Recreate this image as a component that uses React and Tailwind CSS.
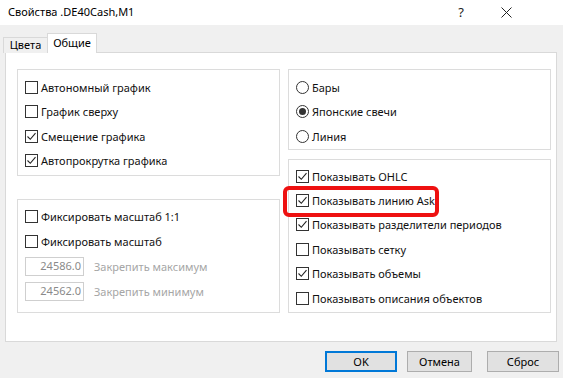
import React from 'react';

const font = { fontFamily: '"Noto Sans", "Open Sans", sans-serif' };

function Check({ checked }) {
  return (
    <span className="w-[13px] h-[13px] border border-[#333] bg-white flex items-center justify-center shrink-0">
      {checked && (
        <svg width="11" height="11" viewBox="0 0 11 11">
          <path d="M1.5 5.5 L4.3 8.3 L9.5 2.2" fill="none" stroke="#222" strokeWidth="1.1" />
        </svg>
      )}
    </span>
  );
}

function Radio({ checked }) {
  return (
    <span className="w-[13px] h-[13px] rounded-full border border-[#333] bg-white flex items-center justify-center shrink-0">
      {checked && <span className="w-[7px] h-[7px] rounded-full bg-[#333]" />}
    </span>
  );
}

function CheckRow({ label, checked, h = 'h-[24.5px]' }) {
  return (
    <div className={`${h} flex items-center gap-[3px] pl-[7px]`}>
      <Check checked={checked} />
      <span className="text-[11px] text-[#111] leading-none">{label}</span>
    </div>
  );
}

function RadioRow({ label, checked }) {
  return (
    <div className="h-[24.5px] flex items-center gap-[3px] pl-[7px]">
      <Radio checked={checked} />
      <span className="text-[11px] text-[#111] leading-none">{label}</span>
    </div>
  );
}

function ValueRow({ value, label }) {
  return (
    <div className="h-[25px] flex items-center pl-[7px] gap-[10px]">
      <div className="w-[59px] h-[19px] border border-[#cfcfcf] bg-white flex items-center justify-end pr-[2px] text-[11px] text-[#8a8a8a]">
        {value}
      </div>
      <span className="text-[11px] text-[#a6a6a6] leading-none">{label}</span>
    </div>
  );
}

export default function App() {
  return (
    <div style={font} className="relative w-[563px] h-[378px] bg-[#f0f0f0] flex flex-col overflow-hidden select-none">
      <div className="h-[25px] bg-white flex items-center pl-[8px]">
        <span className="text-[11px] text-black flex-1">Свойства .DE40Cash,M1</span>
        <span className="w-[20px] text-center text-[13px] text-[#222] mr-[25px]">?</span>
        <span className="w-[20px] flex justify-center mr-[47px]">
          <svg width="11" height="11" viewBox="0 0 11 11">
            <path d="M0.5 0.5 L10.5 10.5 M10.5 0.5 L0.5 10.5" stroke="#222" strokeWidth="1" />
          </svg>
        </span>
      </div>

      <div className="flex items-end h-[20px] pl-[3px] mt-[8px] -mb-px relative z-10">
        <div className="w-[45px] h-[16px] border border-b-0 border-[#d9d9d9] bg-[#f0f0f0] flex items-center justify-center text-[11px] text-black">
          Цвета
        </div>
        <div className="w-[50px] h-[20px] border border-b-0 border-[#d9d9d9] bg-white flex items-center justify-center text-[11px] text-black -ml-px">
          Общие
        </div>
      </div>

      <div className="ml-[5px] w-[552px] h-[290px] border border-[#d9d9d9] bg-white flex gap-[8px] pl-[11px] pt-[16px]">
        <div className="w-[263px] flex flex-col gap-[23px]">
          <div className="h-[107px] border border-[#dcdcdc] pt-[5px]">
            <CheckRow label="Автономный график" />
            <CheckRow label="График сверху" />
            <CheckRow label="Смещение графика" checked />
            <CheckRow label="Автопрокрутка графика" checked />
          </div>
          <div className="h-[114px] border border-[#dcdcdc] pt-[4px]">
            <CheckRow label="Фиксировать масштаб 1:1" h="h-[25px]" />
            <CheckRow label="Фиксировать масштаб" h="h-[25px]" />
            <ValueRow value="24586.0" label="Закрепить максимум" />
            <ValueRow value="24562.0" label="Закрепить минимум" />
          </div>
        </div>
        <div className="w-[263px] flex flex-col gap-[9px]">
          <div className="h-[81px] border border-[#dcdcdc] pt-[5px]">
            <RadioRow label="Бары" />
            <RadioRow label="Японские свечи" checked />
            <RadioRow label="Линия" />
          </div>
          <div className="h-[154px] border border-[#dcdcdc] pt-[4px]">
            <CheckRow label="Показывать OHLC" checked h="h-[24.4px]" />
            <CheckRow label="Показывать линию Ask" checked h="h-[24.4px]" />
            <CheckRow label="Показывать разделители периодов" checked h="h-[24.4px]" />
            <CheckRow label="Показывать сетку" h="h-[24.4px]" />
            <CheckRow label="Показывать объемы" checked h="h-[24.4px]" />
            <CheckRow label="Показывать описания объектов" h="h-[24.4px]" />
          </div>
        </div>
      </div>

      <div className="flex justify-end gap-[10px] pr-[4px] mt-[9px]">
        <button className="w-[72px] h-[21px] border-2 border-[#0078d7] bg-[#e1e1e1] text-[11px] text-black leading-none">OK</button>
        <button className="w-[65px] h-[21px] border border-[#adadad] bg-[#e1e1e1] text-[11px] text-black leading-none">Отмена</button>
        <button className="w-[72px] h-[21px] ml-[5px] border border-[#adadad] bg-[#e1e1e1] text-[11px] text-black leading-none">Сброс</button>
      </div>

      <div className="absolute left-[283px] top-[186px] w-[156px] h-[31px] border-4 border-[#ee1111] rounded-[6px] pointer-events-none" />
    </div>
  );
}
